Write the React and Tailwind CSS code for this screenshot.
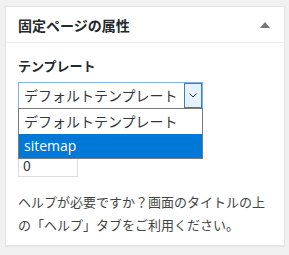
export default function App() {
  return (
    <div className="min-h-screen w-full bg-[#f1f1f1] pt-[6px] pl-[5px]" style={{ fontFamily: '"Noto Sans CJK JP", "Noto Sans", sans-serif' }}>
      <div className="w-[280px] h-[240px] bg-white border border-[#e5e5e5] shadow-[0_1px_1px_rgba(0,0,0,0.04)]">
        {/* Header */}
        <div className="h-[36px] flex items-center justify-between pl-[12px] pr-[14px] border-b border-[#eeeeee]">
          <h2 className="text-[14px] font-bold text-[#23282d] leading-none">固定ページの属性</h2>
          <svg width="10" height="6" viewBox="0 0 10 6" className="mt-[1px]">
            <path d="M5 0 L10 6 L0 6 Z" fill="#72777c" />
          </svg>
        </div>

        {/* Body */}
        <div className="pl-[12px] pr-[12px] pt-[12px]">
          <p className="text-[13px] font-semibold text-[#23282d] leading-[22px]">テンプレート</p>
          <div className="relative mt-[5px]">
            <div className="w-[185px] h-[27px] flex border border-[#7eb4ea] bg-white">
              <span className="flex-1 pl-[5px] text-[14px] text-[#32373c] leading-[25px] whitespace-nowrap overflow-hidden">デフォルトテンプレート</span>
              <span className="w-[18px] h-full flex items-center justify-center bg-[#e5f1fb] border border-[#3c7fb1]">
                <svg width="8" height="5" viewBox="0 0 8 5">
                  <path d="M0.5 0.5 L4 4 L7.5 0.5" fill="none" stroke="#333" strokeWidth="1" />
                </svg>
              </span>
            </div>
            {/* Open list */}
            <div className="absolute left-0 top-[26px] w-[185px] bg-white border border-[#7a7a7a] z-10">
              <div className="h-[25px] pl-[5px] text-[14px] text-[#32373c] leading-[25px] whitespace-nowrap">デフォルトテンプレート</div>
              <div className="h-[24px] pl-[5px] text-[14px] text-white bg-[#0078d7] leading-[24px]" style={{ fontFamily: '"Open Sans", "Noto Sans", sans-serif' }}>sitemap</div>
            </div>
          </div>

          {/* hidden under the open list */}
          <div className="mt-[14px] h-[20px]" />
          <div className="mt-[10px] w-[60px] h-[24px] border border-[#dddddd] pl-[4px] text-[14px] text-[#32373c] leading-[22px]">0</div>

          <p className="mt-[13px] text-[13px] text-[#444444] leading-[23px] whitespace-nowrap">
            ヘルプが必要ですか？画面のタイトルの上
            <br />
            の「ヘルプ」タブをご利用ください。
          </p>
        </div>
      </div>
    </div>
  );
}
